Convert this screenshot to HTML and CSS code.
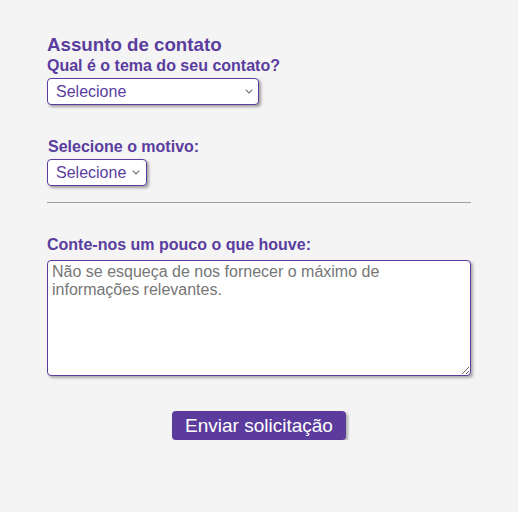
FILE: index.html
```html
<!DOCTYPE html>
<html lang="pt-BR">
<head>
<meta charset="utf-8">
<link rel="stylesheet" href="styles.css">
</head>
<body>
<form class="form">
  <h2 class="title">Assunto de contato</h2>
  <label class="label label-first" for="tema">Qual é o tema do seu contato?</label>
  <span class="select-wrap select-wrap-first">
    <select id="tema" class="select select-wide"><option>Selecione</option></select>
    <svg class="chevron" width="8" height="5" viewBox="0 0 8 5"><path d="M0.7 0.7 L4 4 L7.3 0.7" fill="none" stroke="#767676" stroke-width="1.2"/></svg>
  </span>
  <label class="label label-motivo" for="motivo">Selecione o motivo:</label>
  <span class="select-wrap">
    <select id="motivo" class="select select-narrow"><option>Selecione</option></select>
    <svg class="chevron" width="8" height="5" viewBox="0 0 8 5"><path d="M0.7 0.7 L4 4 L7.3 0.7" fill="none" stroke="#767676" stroke-width="1.2"/></svg>
  </span>
  <hr class="divider">
  <label class="label label-msg" for="msg">Conte-nos um pouco o que houve:</label>
  <textarea id="msg" class="textarea" placeholder="Não se esqueça de nos fornecer o máximo de informações relevantes."></textarea>
  <div class="actions"><button type="button" class="button">Enviar solicitação</button></div>
</form>
</body>
</html>
```
FILE: styles.css
```css
html, body { margin: 0; padding: 0; background: #f4f4f4; }
body { font-family: "Liberation Sans", Arial, sans-serif; color: #5a3d9e; }
.form { width: 424px; margin: 0 auto; padding-top: 34px; display: flex; flex-direction: column; align-items: flex-start; }
.title { margin: 0; font-size: 18.72px; line-height: 22px; font-weight: bold; color: #5a3d9e; }
.label { display: block; font-size: 16px; line-height: 18px; font-weight: bold; color: #5a3d9e; }
.label-first { margin-top: 1px; }
.label-motivo { margin-top: 33px; margin-left: 1px; }
.label-msg { margin-top: 33px; }
.select-wrap { position: relative; display: flex; margin-top: 3px; }
.select-wrap-first { margin-top: 3px; }
.select { -webkit-appearance: none; appearance: none; box-sizing: border-box; height: 27px; font-family: "Liberation Sans", Arial, sans-serif; font-size: 16px; color: #5a3d9e; background: #fff; border: 1px solid #5a3d9e; border-radius: 4px; padding: 0 20px 0 8px; box-shadow: 2px 2px 3px rgba(0,0,0,0.35); }
.select-wide { width: 212px; }
.select-narrow { width: 100px; }
.chevron { position: absolute; right: 6px; top: 11px; pointer-events: none; }
.select-narrow + .chevron { right: 7px; }
.divider { width: 100%; margin: 16px 0 0; border: 0; border-top: 1px solid #9e9e9e; height: 0; }
.textarea { margin-top: 6px; width: 424px; height: 116px; box-sizing: border-box; font-family: "Liberation Sans", Arial, sans-serif; font-size: 16px; line-height: 18px; padding: 2px 4px; color: #333; background: #fff; border: 1px solid #5a3d9e; border-radius: 4px; box-shadow: 2px 2px 3px rgba(0,0,0,0.3); resize: vertical; }
.textarea::placeholder { color: #767676; }
.actions { width: 100%; display: flex; justify-content: center; margin-top: 35px; }
.button { font-family: "Liberation Sans", Arial, sans-serif; font-size: 19px; line-height: 21px; color: #fff; background: #5b3c9c; border: 0; border-radius: 4px; padding: 4px 13px; box-shadow: 2px 2px 3px rgba(0,0,0,0.3); }
```
